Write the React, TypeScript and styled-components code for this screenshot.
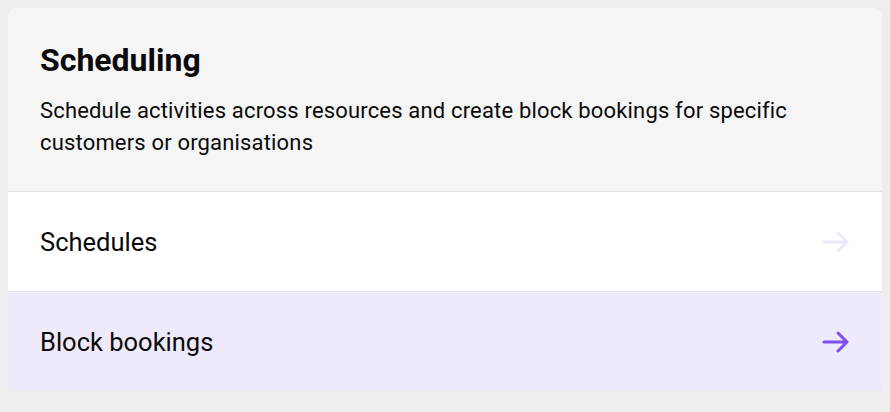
import styled, { createGlobalStyle } from 'styled-components';

const GlobalStyle = createGlobalStyle`
  body {
    margin: 8px;
    background: #eeeeee;
    font-family: Roboto, "Liberation Sans", sans-serif;
    color: #0a0a0a;
  }
`;

const links = [
  { label: 'Schedules', active: false },
  { label: 'Block bookings', active: true },
];

function ArrowIcon({ active }: { active: boolean }) {
  return (
    <Arrow viewBox="0 0 28 22" $active={active}>
      <path d="M2 11h23M16 2l9 9-9 9" />
    </Arrow>
  );
}

function App() {
  return (
    <>
      <GlobalStyle />
      <Card>
        <Header>
          <Title>Scheduling</Title>
          <Description>
            Schedule activities across resources and create block bookings for specific customers or
            organisations
          </Description>
        </Header>
        {links.map((link) => (
          <LinkRow key={link.label} $active={link.active}>
            <span>{link.label}</span>
            <ArrowIcon active={link.active} />
          </LinkRow>
        ))}
      </Card>
    </>
  );
}

const Card = styled.div`
  display: flex;
  flex-direction: column;
  border-radius: 8px 8px 4px 4px;
  overflow: hidden;
  box-shadow: 0 2px 4px rgba(0, 0, 0, 0.08);
`;

const Header = styled.div`
  display: flex;
  flex-direction: column;
  gap: 15px;
  padding: 32px 32px 32px;
  background: #f5f5f5;
`;

const Title = styled.h2`
  margin: 0;
  font-size: 32px;
  line-height: 40px;
  font-weight: 700;
`;

const Description = styled.p`
  margin: 0;
  font-size: 22px;
  line-height: 32px;
  letter-spacing: 0.17px;
`;

const LinkRow = styled.a<{ $active: boolean }>`
  display: flex;
  justify-content: space-between;
  align-items: center;
  height: 99px;
  padding: 0 32px;
  border-top: 1px solid #e3e3e3;
  background: ${({ $active }) => ($active ? '#efeafb' : '#ffffff')};
  font-size: 25.5px;
  cursor: pointer;
`;

const Arrow = styled.svg<{ $active: boolean }>`
  width: 28px;
  height: 22px;
  fill: none;
  stroke: ${({ $active }) => ($active ? '#7b4ef0' : '#ede7fc')};
  stroke-width: 3;
  stroke-linecap: round;
  stroke-linejoin: round;
`;

export default App;
